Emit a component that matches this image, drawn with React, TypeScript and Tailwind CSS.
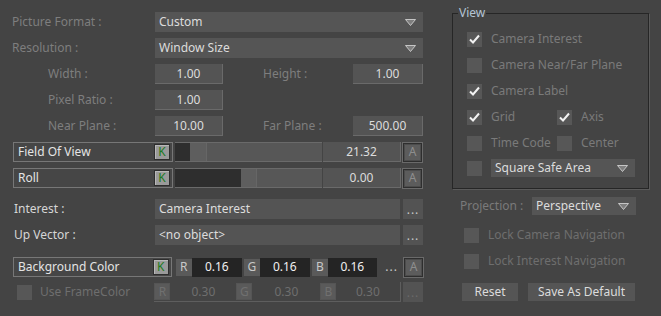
import React from "react";

const F = { fontFamily: '"Noto Sans", "DejaVu Sans", sans-serif' };

function Arrow() {
  return (
    <svg width="11" height="7" viewBox="0 0 11 7" className="shrink-0">
      <path d="M0.5 0.5 L10.5 0.5 L5.5 6.5 Z" fill="#7e7e7e" stroke="#cfcfcf" strokeWidth="0.9" />
    </svg>
  );
}

function Dropdown({ text, className }: { text: string; className: string }) {
  return (
    <div className={"flex items-center justify-between bg-[#555555] pl-1 pr-[7px] text-[12px] text-[#dcdcdc] " + className}>
      <span>{text}</span>
      <Arrow />
    </div>
  );
}

function Num({ v, className, dim }: { v: string; className: string; dim?: boolean }) {
  return (
    <div
      className={
        "flex items-center justify-center border-b border-r border-[#6a6a6a] bg-[#545454] text-[12px] " +
        (dim ? "text-[#6e6e6e] " : "text-[#dcdcdc] ") +
        className
      }
    >
      {v}
    </div>
  );
}

function KBtn() {
  return (
    <div className="ml-auto flex h-[16px] w-[16px] items-center justify-center border border-[#2e2e2e] bg-[#9a9a9a] text-[12px] leading-none text-[#1d7a1d] shadow-[inset_1px_1px_0_#b8b8b8]">
      K
    </div>
  );
}

function ABtn() {
  return (
    <div className="flex h-[19px] w-[19px] items-center justify-center border border-[#2e2e2e] bg-[#4c4c4c] shadow-[0_0_0_1px_#6a6a6a]">
      <div className="flex h-[15px] w-[15px] items-center justify-center bg-[#5c5c5c] text-[12px] leading-none text-[#8e8e8e]">A</div>
    </div>
  );
}

function Dots({ dim }: { dim?: boolean }) {
  return (
    <div
      className={
        "flex h-5 w-5 items-end justify-center bg-[#535353] pb-[3px] text-[12px] leading-none tracking-[1px] " +
        (dim ? "text-[#6a6a6a]" : "text-[#c8c8c8]")
      }
    >
      ...
    </div>
  );
}

function LabelBox({ text }: { text: string }) {
  return (
    <div className="flex h-5 w-[160px] items-center border border-[#777777] bg-[#464646] pl-1 pr-[2px] text-[12px] text-[#e4e4e4]">
      <span>{text}</span>
      <KBtn />
    </div>
  );
}

function Slider({ dark, thumb }: { dark: number; thumb: number }) {
  return (
    <div className="ml-[2px] flex h-5 w-[147px] border-b border-t border-[#6a6a6a] bg-[#575757]">
      <div className="h-full bg-[#2e2e2e]" style={{ width: dark }} />
      <div className="h-full border-r border-[#666666] bg-[#5e5e5e]" style={{ width: thumb }} />
    </div>
  );
}

function Check({ checked, className }: { checked?: boolean; className?: string }) {
  return (
    <div className={"relative h-[15px] w-[15px] shrink-0 bg-[#575757] " + (className || "")}>
      {checked && (
        <svg width="15" height="15" viewBox="0 0 15 15" className="absolute left-0 top-0">
          <path d="M3 7.5 L6 10.5 L12 3.5" fill="none" stroke="#f2f2f2" strokeWidth="2" />
        </svg>
      )}
    </div>
  );
}

function ChanBtn({ c, dim }: { c: string; dim?: boolean }) {
  return (
    <div
      className={
        "flex h-[17px] w-[16px] shrink-0 items-center justify-center bg-[#5a5a5a] text-[12px] leading-none " +
        (dim ? "text-[#707070] border border-[#555]" : "text-[#c8c8c8]")
      }
    >
      {c}
    </div>
  );
}

export default function App() {
  return (
    <div className="flex h-[316px] w-[661px] bg-[#444444]" style={F}>
      {/* Left column */}
      <div className="flex w-[423px] flex-col pl-[12px] pt-[12px] text-[12px]">
        <div className="flex h-5 items-center">
          <span className="w-[143px] text-[#7e7e7e]">Picture Format :</span>
          <Dropdown text="Custom" className="h-5 w-[268px]" />
        </div>
        <div className="mt-[6px] flex h-5 items-center">
          <span className="w-[143px] text-[#7e7e7e]">Resolution :</span>
          <Dropdown text="Window Size" className="h-5 w-[268px]" />
        </div>
        <div className="mt-[6px] flex h-5 items-center">
          <span className="w-[107px] pl-[36px] text-[#7e7e7e]">Width :</span>
          <span className="w-[36px]" />
          <Num v="1.00" className="h-5 w-[68px]" />
          <span className="w-[40px]" />
          <span className="w-[90px] text-[#7e7e7e]">Height :</span>
          <Num v="1.00" className="h-5 w-[70px]" />
        </div>
        <div className="mt-[6px] flex h-5 items-center">
          <span className="w-[143px] pl-[36px] text-[#7e7e7e]">Pixel Ratio :</span>
          <Num v="1.00" className="h-5 w-[68px]" />
        </div>
        <div className="mt-[6px] flex h-5 items-center">
          <span className="w-[143px] pl-[36px] text-[#7e7e7e]">Near Plane :</span>
          <Num v="10.00" className="h-5 w-[68px]" />
          <span className="w-[40px]" />
          <span className="w-[90px] text-[#7e7e7e]">Far Plane :</span>
          <Num v="500.00" className="h-5 w-[70px]" />
        </div>
        <div className="ml-[1px] mt-[6px] flex h-5 items-center">
          <LabelBox text="Field Of View" />
          <Slider dark={15} thumb={17} />
          <Num v="21.32" className="ml-[1px] h-5 w-[78px]" />
          <div className="ml-[2px]"><ABtn /></div>
        </div>
        <div className="ml-[1px] mt-[6px] flex h-5 items-center">
          <LabelBox text="Roll" />
          <Slider dark={66} thumb={16} />
          <Num v="0.00" className="ml-[1px] h-5 w-[78px]" />
          <div className="ml-[2px]"><ABtn /></div>
        </div>
        <div className="mt-[11px] flex h-5 items-center">
          <span className="w-[143px] pl-[2px] text-[#d6d6d6]">Interest :</span>
          <div className="flex h-5 w-[245px] items-center bg-[#545454] pl-1 text-[#dcdcdc]">Camera Interest</div>
          <div className="ml-[3px]"><Dots /></div>
        </div>
        <div className="mt-[6px] flex h-5 items-center">
          <span className="w-[143px] pl-[2px] text-[#d6d6d6]">Up Vector :</span>
          <div className="flex h-5 w-[245px] items-center bg-[#545454] pl-1 text-[#dcdcdc]">&lt;no object&gt;</div>
          <div className="ml-[3px]"><Dots /></div>
        </div>
        <div className="ml-[1px] mt-[12px] flex h-5 items-center">
          <LabelBox text="Background Color" />
          <div className="ml-[4px] flex h-5 w-[206px] items-center">
            <ChanBtn c="R" />
            <div className="flex h-[19px] w-[50px] items-center justify-center bg-[#242424] text-[#f0f0f0]">0.16</div>
            <div className="ml-[2px]"><ChanBtn c="G" /></div>
            <div className="flex h-[19px] w-[50px] items-center justify-center bg-[#242424] text-[#f0f0f0]">0.16</div>
            <div className="ml-[2px]"><ChanBtn c="B" /></div>
            <div className="flex h-[19px] w-[49px] items-center justify-center bg-[#242424] text-[#f0f0f0]">0.16</div>
          </div>
          <div className="ml-[2px] flex h-5 w-[19px] items-end justify-center pb-[4px] leading-none tracking-[1px] text-[#c8c8c8]">...</div>
          <div className="ml-[3px]"><ABtn /></div>
        </div>
        <div className="mt-[5px] flex h-5 items-center">
          <Check className="ml-[5px]" />
          <span className="ml-[8px] w-[115px] text-[#6e6e6e]">Use FrameColor</span>
          <div className="flex h-5 w-[248px] items-center border-b border-r border-[#5e5e5e]">
            <ChanBtn c="R" dim />
            <div className="flex w-[66px] justify-center text-[#6e6e6e]">0.30</div>
            <ChanBtn c="G" dim />
            <div className="flex w-[68px] justify-center text-[#6e6e6e]">0.30</div>
            <ChanBtn c="B" dim />
            <div className="flex w-[63px] justify-center text-[#6e6e6e]">0.30</div>
          </div>
          <div className="ml-[2px]"><Dots dim /></div>
        </div>
      </div>

      {/* Right column */}
      <div className="ml-[29px] flex w-[197px] flex-col pt-[13px] text-[12px]">
        <div className="relative h-[176px] w-[197px] border border-[#262626] shadow-[1px_1px_0_#5a5a5a]">
          <div className="absolute -top-[9px] left-[5px] bg-[#444444] px-[1px] leading-[16px] text-[#b4c4d4]">View</div>
          <div className="flex flex-col pl-[14px] pt-[17px] text-[#7a7a7a]">
            <div className="flex h-[16px] items-center">
              <Check checked />
              <span className="ml-[9px]">Camera Interest</span>
            </div>
            <div className="mt-[10px] flex h-[16px] items-center">
              <Check />
              <span className="ml-[9px]">Camera Near/Far Plane</span>
            </div>
            <div className="mt-[10px] flex h-[16px] items-center">
              <Check checked />
              <span className="ml-[9px]">Camera Label</span>
            </div>
            <div className="mt-[10px] flex h-[16px] items-center">
              <Check checked />
              <span className="ml-[9px] w-[66px]">Grid</span>
              <Check checked />
              <span className="ml-[9px]">Axis</span>
            </div>
            <div className="mt-[10px] flex h-[16px] items-center">
              <Check />
              <span className="ml-[9px] w-[66px]">Time Code</span>
              <Check />
              <span className="ml-[9px]">Center</span>
            </div>
            <div className="mt-[8px] flex h-[18px] items-center">
              <Check />
              <Dropdown text="Square Safe Area" className="ml-[9px] h-[18px] w-[144px] text-[#d6d6d6]" />
            </div>
          </div>
        </div>
        <div className="mt-[8px] flex h-[18px] items-center">
          <span className="ml-[8px] w-[72px] text-[#7a7a7a]">Projection :</span>
          <Dropdown text="Perspective" className="h-[18px] w-[104px]" />
        </div>
        <div className="mt-[12px] flex h-[16px] items-center text-[#6e6e6e]">
          <Check className="ml-[12px]" />
          <span className="ml-[9px]">Lock Camera Navigation</span>
        </div>
        <div className="mt-[10px] flex h-[16px] items-center text-[#6e6e6e]">
          <Check className="ml-[12px]" />
          <span className="ml-[9px]">Lock Interest Navigation</span>
        </div>
        <div className="mt-[14px] flex items-center">
          <div className="ml-[10px] flex h-[18px] w-[56px] items-center justify-center bg-[#555555] text-[#dcdcdc]">Reset</div>
          <div className="ml-[10px] flex h-[18px] w-[107px] items-center justify-center bg-[#555555] text-[#dcdcdc]">Save As Default</div>
        </div>
      </div>
    </div>
  );
}
